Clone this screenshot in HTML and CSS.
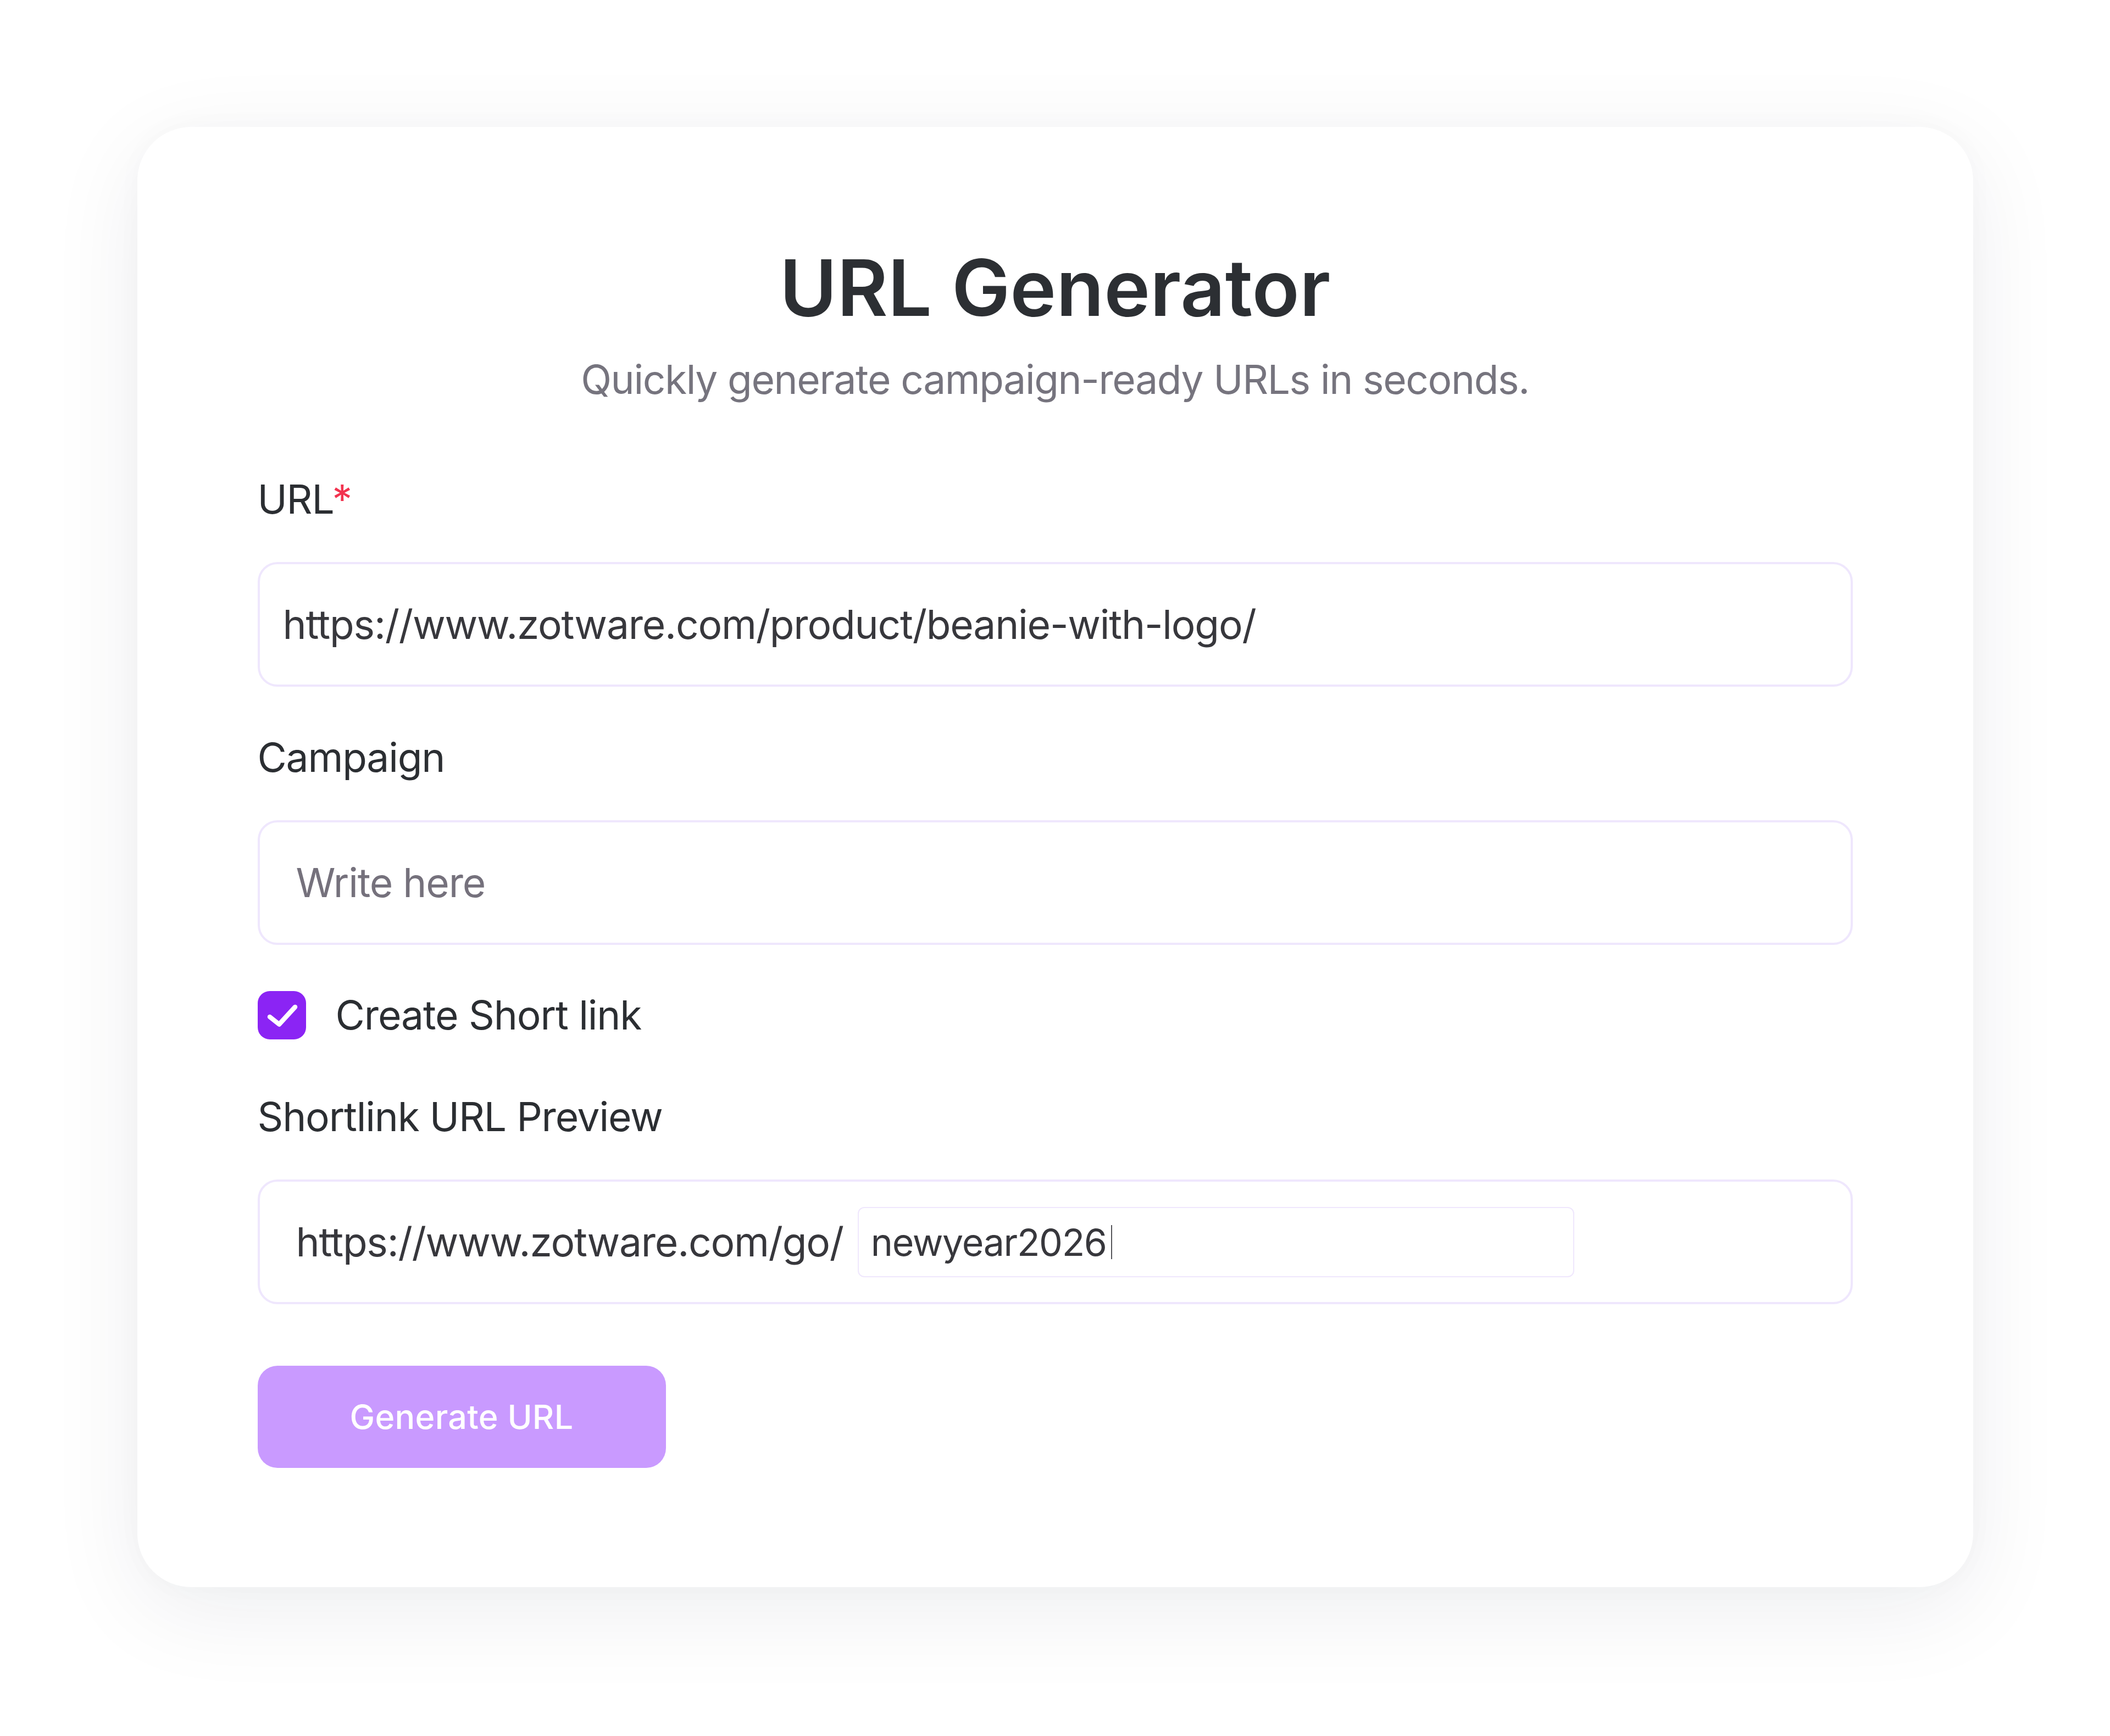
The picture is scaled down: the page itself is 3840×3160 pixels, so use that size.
FILE: index.html
```html
<!DOCTYPE html>
<html lang="en">
<head>
<meta charset="utf-8">
<title>URL Generator</title>
<link rel="stylesheet" href="styles.css">
</head>
<body>
<main class="page">
  <section class="card">
    <h1 class="title">URL Generator</h1>
    <p class="subtitle">Quickly generate campaign-ready URLs in seconds.</p>
    <form class="form">
      <label class="label label-url" for="url">URL<span class="req">*</span></label>
      <input class="field field-url" id="url" type="text" value="https://www.zotware.com/product/beanie-with-logo/">

      <label class="label label-campaign" for="campaign">Campaign</label>
      <input class="field field-campaign" id="campaign" type="text" placeholder="Write here">

      <div class="check-row">
        <span class="checkbox">
          <svg viewBox="0 0 88 88" width="88" height="88" aria-hidden="true">
            <path d="M22 47 L39 60.5 L68 29" fill="none" stroke="#ffffff" stroke-width="8.5" stroke-linecap="round" stroke-linejoin="round"/>
          </svg>
        </span>
        <span class="check-label">Create Short link</span>
      </div>

      <div class="label label-preview">Shortlink URL Preview</div>
      <div class="preview">
        <span class="prefix">https://www.zotware.com/go/</span>
        <div class="slug"><span class="slug-text">newyear2026</span><span class="caret"></span></div>
      </div>

      <button class="btn" type="button">Generate URL</button>
    </form>
  </section>
</main>
</body>
</html>
```
FILE: styles.css
```css
html, body {
  margin: 0;
  padding: 0;
  background: #ffffff;
}

body {
  font-family: Inter, "Noto Sans", "Liberation Sans", sans-serif;
  width: 3840px;
  height: 3160px;
  overflow: hidden;
}

.page {
  display: flex;
  justify-content: center;
  padding-top: 231px;
}

.card {
  box-sizing: border-box;
  width: 3341px;
  padding: 207px 219px 217px;
  background: #ffffff;
  border-radius: 98px;
  box-shadow: 0 40px 170px rgba(20, 30, 60, 0.075), 0 0 50px rgba(20, 30, 60, 0.025);
  display: flex;
  flex-direction: column;
}

.title {
  margin: 0;
  text-align: center;
  font-size: 142px;
  line-height: 170px;
  font-weight: 600;
  color: #2c2f33;
  letter-spacing: 0;
}

.subtitle {
  margin: 39px 0 0;
  text-align: center;
  font-size: 73px;
  line-height: 88px;
  color: #76747e;
  font-weight: 400;
  letter-spacing: -1.4px;
}

.form {
  display: flex;
  flex-direction: column;
  align-items: flex-start;
  margin-top: 130px;
}

.label {
  display: block;
  font-size: 73px;
  line-height: 88px;
  color: #2b2e32;
  font-weight: 400;
  letter-spacing: -1.2px;
}

.req {
  color: #f2334f;
}

.label-campaign {
  margin-top: 85px;
}

.label-preview {
  margin-top: 97px;
}

.field {
  box-sizing: border-box;
  display: block;
  width: 100%;
  height: 227px;
  margin: 70px 0 0;
  border: 4px solid #efe7fd;
  border-radius: 36px;
  background: #ffffff;
  font-family: Inter, "Noto Sans", "Liberation Sans", sans-serif;
  font-size: 73px;
  line-height: 88px;
  color: #37373c;
  letter-spacing: -1.2px;
  outline: none;
}

.field-url {
  padding: 0 42px;
}

.field-campaign {
  padding: 0 66px;
}

.field-campaign::placeholder {
  color: #75717c;
  opacity: 1;
}

.check-row {
  display: flex;
  align-items: center;
  margin-top: 84px;
  height: 88px;
}

.checkbox {
  width: 88px;
  height: 88px;
  border-radius: 22px;
  background: #8b24f4;
  display: flex;
  flex-shrink: 0;
}

.check-label {
  margin-left: 54px;
  font-size: 73px;
  line-height: 88px;
  color: #2b2e32;
  letter-spacing: -1.1px;
}

.preview {
  box-sizing: border-box;
  width: 100%;
  height: 227px;
  margin-top: 70px;
  border: 4px solid #efe7fd;
  border-radius: 36px;
  padding: 0 66px;
  display: flex;
  align-items: center;
}

.prefix {
  font-size: 73px;
  line-height: 88px;
  color: #37373c;
  white-space: nowrap;
  letter-spacing: -1.25px;
}

.slug {
  box-sizing: border-box;
  width: 1304px;
  height: 128px;
  margin-left: 26px;
  border: 2px solid #efe7fd;
  border-radius: 12px;
  padding: 0 22px;
  display: flex;
  align-items: center;
}

.slug-text {
  font-size: 68px;
  line-height: 84px;
  color: #37373c;
  letter-spacing: -1.3px;
}

.caret {
  width: 2px;
  height: 62px;
  margin-left: 8px;
  background: #55555a;
}

.btn {
  margin-top: 112px;
  width: 743px;
  height: 186px;
  border: none;
  border-radius: 36px;
  background: #c99aff;
  color: #ffffff;
  font-family: Inter, "Noto Sans", "Liberation Sans", sans-serif;
  font-size: 61px;
  font-weight: 500;
  line-height: 74px;
  letter-spacing: 0.3px;
  padding: 0;
  cursor: pointer;
}
```
